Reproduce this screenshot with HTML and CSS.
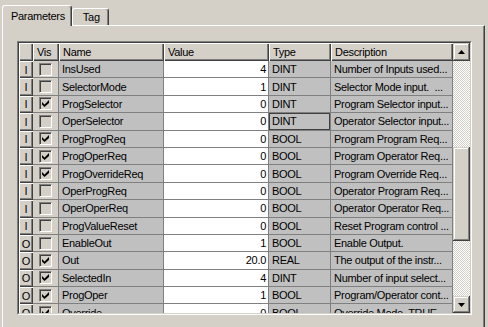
FILE: index.html
```html
<!DOCTYPE html>
<html>
<head>
    <title>Parameters</title>
    <link rel="stylesheet" href="styles.css">
</head>
<body>
<div class="window">
    <div class="tabs">
        <div class="tab active">Parameters</div>
        <div class="tab">Tag</div>
    </div>
    <div class="panel">
        <div class="grid-box">
            <div class="grid-frame">
                <div class="table">
                    <div class="row head">
                        <div class="c"></div>
                        <div class="c">Vis</div>
                        <div class="c">Name</div>
                        <div class="c">Value</div>
                        <div class="c">Type</div>
                        <div class="c">Description</div>
                    </div>
                    <div class="row">
                        <div class="use">I</div>
                        <div class="c vis"><span class="chk"></span></div>
                        <div class="c">InsUsed</div>
                        <div class="c num">4</div>
                        <div class="c">DINT</div>
                        <div class="c">Number of Inputs used...</div>
                    </div>
                    <div class="row">
                        <div class="use">I</div>
                        <div class="c vis"><span class="chk"></span></div>
                        <div class="c">SelectorMode</div>
                        <div class="c num">1</div>
                        <div class="c">DINT</div>
                        <div class="c">Selector Mode input. &nbsp;...</div>
                    </div>
                    <div class="row">
                        <div class="use">I</div>
                        <div class="c vis"><span class="chk"><svg viewBox="0 0 7 7"><path d="M0 2L2.5 4.5L7 0V3L2.5 7L0 4.5Z"/></svg></span></div>
                        <div class="c">ProgSelector</div>
                        <div class="c num">0</div>
                        <div class="c">DINT</div>
                        <div class="c">Program Selector input...</div>
                    </div>
                    <div class="row">
                        <div class="use">I</div>
                        <div class="c vis"><span class="chk"></span></div>
                        <div class="c">OperSelector</div>
                        <div class="c num">0</div>
                        <div class="c focus">DINT</div>
                        <div class="c">Operator Selector input...</div>
                    </div>
                    <div class="row">
                        <div class="use">I</div>
                        <div class="c vis"><span class="chk"><svg viewBox="0 0 7 7"><path d="M0 2L2.5 4.5L7 0V3L2.5 7L0 4.5Z"/></svg></span></div>
                        <div class="c">ProgProgReq</div>
                        <div class="c num">0</div>
                        <div class="c">BOOL</div>
                        <div class="c">Program Program Req...</div>
                    </div>
                    <div class="row">
                        <div class="use">I</div>
                        <div class="c vis"><span class="chk"><svg viewBox="0 0 7 7"><path d="M0 2L2.5 4.5L7 0V3L2.5 7L0 4.5Z"/></svg></span></div>
                        <div class="c">ProgOperReq</div>
                        <div class="c num">0</div>
                        <div class="c">BOOL</div>
                        <div class="c">Program Operator Req...</div>
                    </div>
                    <div class="row">
                        <div class="use">I</div>
                        <div class="c vis"><span class="chk"><svg viewBox="0 0 7 7"><path d="M0 2L2.5 4.5L7 0V3L2.5 7L0 4.5Z"/></svg></span></div>
                        <div class="c">ProgOverrideReq</div>
                        <div class="c num">0</div>
                        <div class="c">BOOL</div>
                        <div class="c">Program Override Req...</div>
                    </div>
                    <div class="row">
                        <div class="use">I</div>
                        <div class="c vis"><span class="chk"></span></div>
                        <div class="c">OperProgReq</div>
                        <div class="c num">0</div>
                        <div class="c">BOOL</div>
                        <div class="c">Operator Program Req...</div>
                    </div>
                    <div class="row">
                        <div class="use">I</div>
                        <div class="c vis"><span class="chk"></span></div>
                        <div class="c">OperOperReq</div>
                        <div class="c num">0</div>
                        <div class="c">BOOL</div>
                        <div class="c">Operator Operator Req...</div>
                    </div>
                    <div class="row">
                        <div class="use">I</div>
                        <div class="c vis"><span class="chk"></span></div>
                        <div class="c">ProgValueReset</div>
                        <div class="c num">0</div>
                        <div class="c">BOOL</div>
                        <div class="c">Reset Program control ...</div>
                    </div>
                    <div class="row">
                        <div class="use">O</div>
                        <div class="c vis"><span class="chk"></span></div>
                        <div class="c">EnableOut</div>
                        <div class="c num">1</div>
                        <div class="c">BOOL</div>
                        <div class="c">Enable Output.</div>
                    </div>
                    <div class="row">
                        <div class="use">O</div>
                        <div class="c vis"><span class="chk"><svg viewBox="0 0 7 7"><path d="M0 2L2.5 4.5L7 0V3L2.5 7L0 4.5Z"/></svg></span></div>
                        <div class="c">Out</div>
                        <div class="c num">20.0</div>
                        <div class="c">REAL</div>
                        <div class="c">The output of the instr...</div>
                    </div>
                    <div class="row">
                        <div class="use">O</div>
                        <div class="c vis"><span class="chk"><svg viewBox="0 0 7 7"><path d="M0 2L2.5 4.5L7 0V3L2.5 7L0 4.5Z"/></svg></span></div>
                        <div class="c">SelectedIn</div>
                        <div class="c num">4</div>
                        <div class="c">DINT</div>
                        <div class="c">Number of input select...</div>
                    </div>
                    <div class="row">
                        <div class="use">O</div>
                        <div class="c vis"><span class="chk"><svg viewBox="0 0 7 7"><path d="M0 2L2.5 4.5L7 0V3L2.5 7L0 4.5Z"/></svg></span></div>
                        <div class="c">ProgOper</div>
                        <div class="c num">1</div>
                        <div class="c">BOOL</div>
                        <div class="c">Program/Operator cont...</div>
                    </div>
                    <div class="row">
                        <div class="use">O</div>
                        <div class="c vis"><span class="chk"><svg viewBox="0 0 7 7"><path d="M0 2L2.5 4.5L7 0V3L2.5 7L0 4.5Z"/></svg></span></div>
                        <div class="c">Override</div>
                        <div class="c num">0</div>
                        <div class="c">BOOL</div>
                        <div class="c">Override Mode. TRUE...</div>
                    </div>
                </div>
                <div class="vscroll">
                    <div class="sb-btn up"><svg viewBox="0 0 7 4"><polygon points="3.5,0 7,4 0,4"/></svg></div>
                    <div class="track top"></div>
                    <div class="thumb"></div>
                    <div class="track"></div>
                    <div class="sb-btn down"><svg viewBox="0 0 7 4"><polygon points="0,0 7,0 3.5,4"/></svg></div>
                </div>
            </div>
        </div>
    </div>
</div>
</body>
</html>
```

FILE: styles.css
```css
body { margin: 0; background: #d4d0c8; font: 11px "Liberation Sans", Arial, sans-serif; letter-spacing: -0.3px; color: #000; overflow: hidden; }
.window { padding: 5px 3px 0 2px; }

.tabs { display: flex; align-items: flex-end; height: 20px; position: relative; z-index: 1; }
.tab { height: 17px; box-sizing: border-box; padding: 2px 8px 0 10px; background: #d4d0c8; border: 1px solid #fff; border-bottom: 0; border-right-color: #404040; border-radius: 3px 3px 0 0; box-shadow: inset -1px 0 #808080; }
.tab.active { height: 21px; margin-bottom: -1px; padding: 4px 6px 0 8px; }

.panel { height: 310px; border-top: 1px solid #fff; border-left: 1px solid #fff; border-right: 1px solid #404040; box-shadow: inset -1px 0 #808080; }

.grid-box { margin: 15px 0 0 14px; width: 455px; height: 274px; box-sizing: border-box; border: 1px solid; border-color: #808080 #fff #fff #808080; }
.grid-frame { height: 100%; box-sizing: border-box; border: 1px solid; border-color: #404040 #d4d0c8 #d4d0c8 #404040; display: flex; overflow: hidden; }

.table { width: 434px; overflow: hidden; }
.row { display: grid; grid-template-columns: 14px 26px 105px 105px 62px 122px; height: 17.4px; }
.row.head { height: 18px; }

.c { box-sizing: border-box; display: flex; align-items: center; padding-left: 3px; white-space: nowrap; overflow: hidden; background: #c0c0c0; border-right: 1px solid #808080; border-bottom: 1px solid #808080; }
.c.num { background: #fff; justify-content: flex-end; padding: 0 2px 0 0; }
.c.vis { background: #d4d0c8; justify-content: center; padding: 0; }
.c.focus { box-shadow: inset 0 0 0 1px #404040; }

.head .c { background: #d4d0c8; border: 0; padding-left: 4px; box-shadow: inset 1px 1px #fff, inset -1px -1px #404040, inset -2px -2px #808080; }
.use { display: flex; align-items: center; justify-content: center; background: #d4d0c8; box-shadow: inset 1px 1px #fff, inset -1px -1px #404040, inset -2px -2px #808080; }

.chk { width: 13px; height: 13px; box-sizing: border-box; border: 1px solid; border-color: #808080 #fff #fff #808080; box-shadow: inset 1px 1px #404040, inset -1px -1px #d4d0c8; background: #d4d0c8; display: flex; align-items: center; justify-content: center; }
.chk svg { width: 7px; height: 7px; fill: #000; }

.vscroll { width: 17px; display: flex; flex-direction: column; }
.sb-btn { height: 18px; flex: none; display: flex; align-items: center; justify-content: center; background: #d4d0c8; box-shadow: inset -1px -1px #404040, inset 1px 1px #d4d0c8, inset -2px -2px #808080, inset 2px 2px #fff; }
.sb-btn.down { height: 17px; }
.sb-btn svg { width: 7px; height: 4px; fill: #000; }
.track { flex: 1; background: repeating-conic-gradient(#fff 0 25%, #d4d0c8 0 50%) 0 0 / 2px 2px; }
.track.top { flex: none; height: 86px; }
.thumb { height: 94px; flex: none; background: #d4d0c8; box-shadow: inset -1px -1px #404040, inset 1px 1px #d4d0c8, inset -2px -2px #808080, inset 2px 2px #fff; }
```
